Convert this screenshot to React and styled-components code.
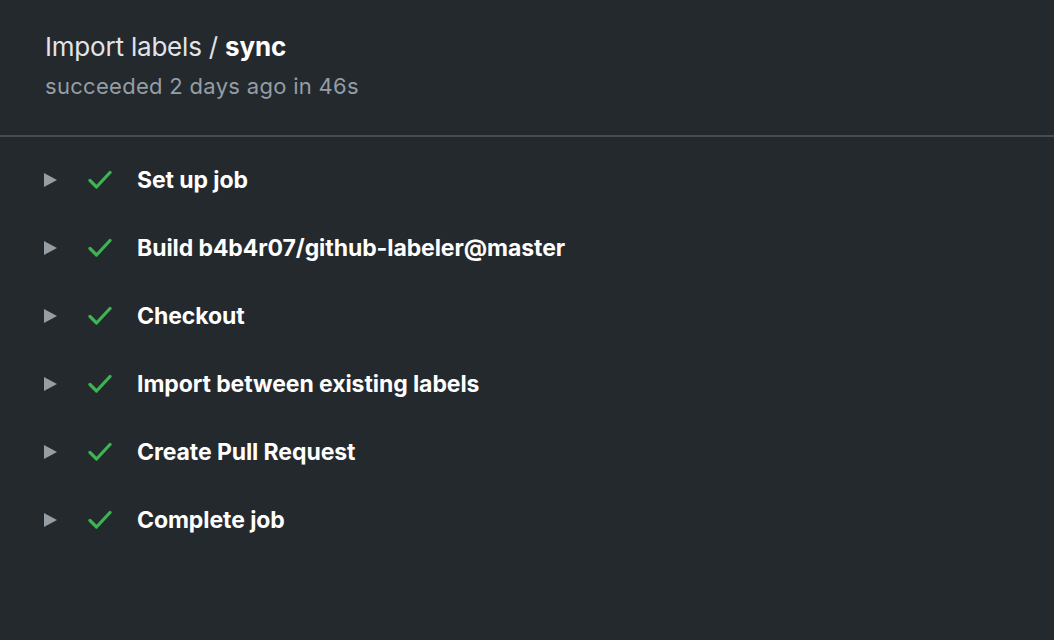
import React from "react";
import styled, { createGlobalStyle } from "styled-components";

const Global = createGlobalStyle`
  html, body { margin: 0; padding: 0; background: #24292e; }
  body { font-family: Inter, "Noto Sans", sans-serif; -webkit-font-smoothing: antialiased; }
`;

const Page = styled.div`
  width: 1054px;
  height: 640px;
  background: #24292e;
  display: flex;
  flex-direction: column;
`;

const Header = styled.header`
  padding: 30px 45px 0;
  height: 137px;
  box-sizing: border-box;
  border-bottom: 2px solid #444d56;
  display: flex;
  flex-direction: column;
  gap: 8px;
`;

const Title = styled.h1`
  margin: 0;
  font-size: 26px;
  line-height: 34px;
  font-weight: 400;
  color: #e1e4e8;
  letter-spacing: -0.2px;
  strong { font-weight: 700; color: #fff; }
`;

const Sub = styled.div`
  font-size: 22px;
  line-height: 28px;
  color: #959da5;
  letter-spacing: 0.3px;
`;

const Steps = styled.ul`
  list-style: none;
  margin: 0;
  padding: 9px 0 0 44px;
  display: flex;
  flex-direction: column;
`;

const Step = styled.li`
  height: 68px;
  display: flex;
  align-items: center;
`;

const Caret = styled.span`
  width: 0;
  height: 0;
  border-top: 7px solid transparent;
  border-bottom: 7px solid transparent;
  border-left: 13px solid #959da5;
  margin-right: 31px;
`;

const Check = styled.svg`
  width: 24px;
  height: 24px;
  margin-right: 25px;
  flex: none;
`;

const Label = styled.span`
  font-size: 23px;
  font-weight: 700;
  color: #fff;
  letter-spacing: -0.08px;
`;

const steps = [
  "Set up job",
  "Build b4b4r07/github-labeler@master",
  "Checkout",
  "Import between existing labels",
  "Create Pull Request",
  "Complete job",
];

export default function App() {
  return (
    <Page>
      <Global />
      <Header>
        <Title>
          Import labels / <strong>sync</strong>
        </Title>
        <Sub>succeeded 2 days ago in 46s</Sub>
      </Header>
      <Steps>
        {steps.map((s) => (
          <Step key={s}>
            <Caret />
            <Check viewBox="0 0 24 24">
              <path
                d="M2 12.5 L8.5 19 L22 4.5"
                fill="none"
                stroke="#3fb254"
                strokeWidth="3.2"
                strokeLinecap="round"
                strokeLinejoin="round"
              />
            </Check>
            <Label>{s}</Label>
          </Step>
        ))}
      </Steps>
    </Page>
  );
}
